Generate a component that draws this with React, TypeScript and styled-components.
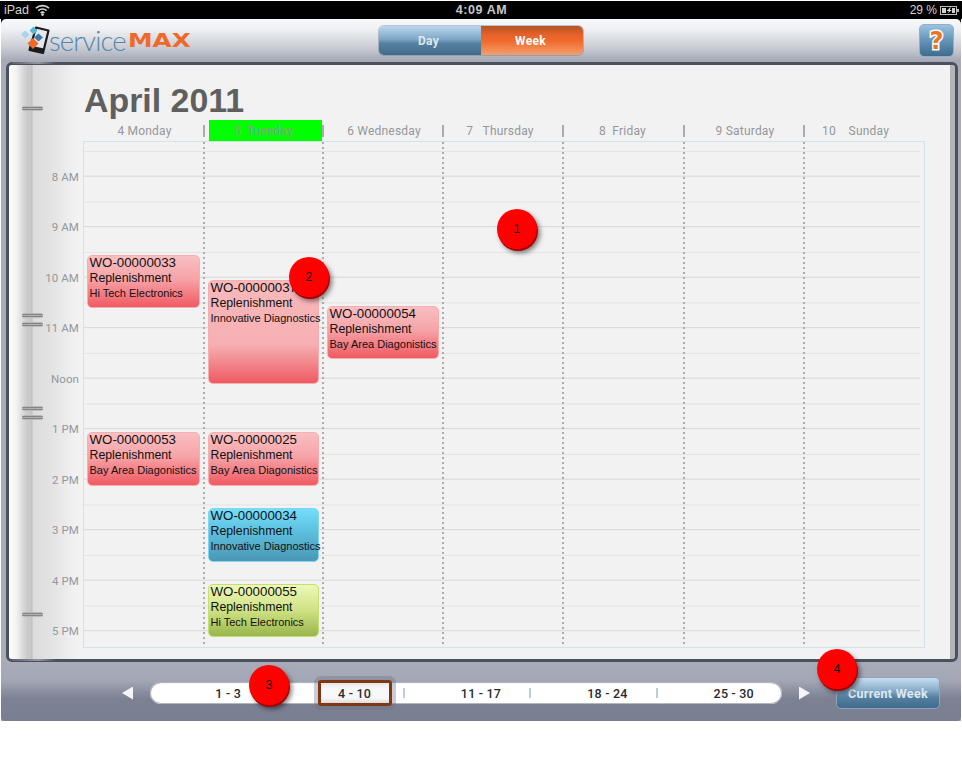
import React from 'react';
import styled, { createGlobalStyle } from 'styled-components';

const GlobalStyle = createGlobalStyle`
  html, body {
    margin: 0;
    padding: 0;
    background: #fff;
  }
  * {
    box-sizing: border-box;
  }
`;

const DIN = `Roboto, "Liberation Sans", sans-serif`;
const ARIAL = `"Liberation Sans", Arial, sans-serif`;

const Page = styled.div`
  position: relative;
  width: 962px;
  height: 770px;
  padding-top: 1px;
  background: #fff;
  overflow: hidden;
  font-family: ${ARIAL};
`;

const StatusBar = styled.div`
  height: 18px;
  display: grid;
  grid-template-columns: 1fr auto 1fr;
  align-items: center;
  padding: 0 3px 0 4px;
  background: #000;
  color: #d4d4d4;
  font-size: 12.5px;
`;

const StatusLeft = styled.div`
  display: flex;
  align-items: center;
  gap: 6px;
`;

const StatusClock = styled.div`
  font-weight: 700;
  font-size: 12.5px;
  letter-spacing: 0.6px;
  color: #c8c8c8;
`;

const StatusRight = styled.div`
  display: flex;
  align-items: center;
  justify-content: flex-end;
  gap: 3px;
  font-size: 12px;
`;

const Shell = styled.div`
  width: 960px;
  height: 702px;
  margin-left: 1px;
  background: #000;
`;

const Header = styled.header`
  height: 43px;
  display: grid;
  grid-template-columns: 1fr auto 1fr;
  align-items: center;
  padding: 0 7px;
  border-radius: 5px 5px 0 0;
  background: linear-gradient(#f7f8fa 0%, #eff0f3 25%, #c6c9d1 70%, #a2a6b3 100%);
`;

const Logo = styled.div`
  display: flex;
  align-items: center;
  margin-left: 12px;
`;

const LogoService = styled.span`
  margin-left: -1px;
  font-family: Lato, ${ARIAL};
  font-weight: 300;
  font-size: 27.5px;
  line-height: 30px;
  letter-spacing: -0.85px;
  color: #5486aa;
`;

const LogoMax = styled.span`
  display: inline-block;
  margin-left: 2px;
  font-family: "DejaVu Sans", sans-serif;
  font-weight: 700;
  font-size: 19px;
  line-height: 19px;
  color: #ef6a2a;
  transform: scaleX(1.3);
  transform-origin: left center;
`;

const Segments = styled.div`
  display: flex;
  width: 204px;
  height: 29px;
  border-radius: 5px;
  overflow: hidden;
  box-shadow: 0 0 0 1px rgba(90, 110, 140, 0.35);
`;

const Segment = styled.div<{ $active?: boolean }>`
  flex: 1;
  display: flex;
  align-items: center;
  justify-content: center;
  padding-right: 3px;
  font-family: ${DIN};
  font-weight: 700;
  font-size: 12px;
  letter-spacing: 0.3px;
  color: ${(p) => (p.$active ? '#fff' : '#dfe8f0')};
  background: ${(p) =>
    p.$active
      ? 'linear-gradient(#b55426 0%, #e5622a 30%, #f0692a 50%, #f2a06e 100%)'
      : 'linear-gradient(#bcd6ec 0%, #7fa7c8 45%, #56819f 60%, #3f6a8c 100%)'};
`;

const HelpButton = styled.div`
  justify-self: end;
  width: 35px;
  height: 33px;
  display: flex;
  align-items: center;
  justify-content: center;
  border-radius: 5px;
  border: 1px solid #8fb0c8;
  background: linear-gradient(#9cc3df 0%, #6d9cc0 40%, #3e6b8e 100%);
  font-family: "DejaVu Sans", sans-serif;
  font-weight: 700;
  font-size: 24px;
  color: #f0731f;
  -webkit-text-stroke: 3px #fff;
  paint-order: stroke fill;
`;

const ShellBody = styled.div`
  background: #a8acb9;
`;

const Notebook = styled.section`
  position: relative;
  width: 952px;
  height: 600px;
  margin-left: 5px;
  border: 3px solid #4c515f;
  border-radius: 6px;
  &::before,
  &::after {
    content: '';
    position: absolute;
    left: 3px;
    width: 44px;
    height: 2px;
    background: linear-gradient(to right, rgba(255, 255, 255, 0.1), rgba(255, 255, 255, 0.4) 60%, rgba(255, 255, 255, 0));
  }
  &::before {
    top: -3px;
  }
  &::after {
    bottom: -2px;
  }
`;

const Paper = styled.div`
  position: relative;
  height: 100%;
  padding-top: 16px;
  border-right: 5px solid #b4b5b8;
  border-radius: 3px;
  background:
    linear-gradient(to right,
      #fcfcfc 0,
      #f4f4f4 7px,
      #dddddd 13px,
      #c8c8c8 19px,
      #cbcbcb 22px,
      #b9b9b9 23px,
      #dcdcdc 24px,
      #e2e2e2 40px,
      #f2f2f2 68px);
`;

const Ring = styled.div<{ $y: number }>`
  position: absolute;
  left: 13px;
  top: ${(p) => p.$y - 65}px;
  width: 21px;
  height: 5px;
  border-radius: 3px;
  background: linear-gradient(
    #b8b8b8 0 1px,
    #858585 1px 2px,
    #b0b0b0 2px 3px,
    #858585 3px 4px,
    #bcbcbc 4px
  );
`;

const Title = styled.h1`
  margin: 0 0 1px 75px;
  font-family: ${ARIAL};
  font-weight: 700;
  font-size: 33.9px;
  line-height: 38px;
  color: #5f5f5f;
`;

const COLUMNS = '121px 119px 120px 120px 121px 120px 1fr';

const DayHeader = styled.div`
  display: grid;
  grid-template-columns: ${COLUMNS};
  width: 842px;
  height: 21px;
  margin-left: 75px;
`;

const DayLabel = styled.div<{ $today?: boolean; $nudge: number }>`
  position: relative;
  display: flex;
  align-items: center;
  justify-content: center;
  padding-right: ${(p) => p.$nudge}px;
  white-space: pre;
  font-family: ${DIN};
  font-size: 12px;
  letter-spacing: 0.2px;
  color: #94979c;
  background: ${(p) => (p.$today ? '#00ff00' : 'transparent')};
  margin-left: ${(p) => (p.$today ? '4px' : '0')};
  margin-right: ${(p) => (p.$today ? '2px' : '0')};
  &:not(:last-child)::after {
    content: '';
    position: absolute;
    right: ${(p) => (p.$today ? '-2px' : '0')};
    top: 5px;
    width: 2px;
    height: 12px;
    background: #a9abaf;
  }
`;

const Body = styled.div`
  display: flex;
`;

const Gutter = styled.div`
  width: 74px;
  padding-top: 10.5px;
`;

const HourLabel = styled.div`
  height: 50.5px;
  display: flex;
  align-items: center;
  justify-content: flex-end;
  padding-right: 4px;
  font-family: ${DIN};
  font-size: 11.5px;
  letter-spacing: 0.1px;
  color: #94979c;
`;

const Grid = styled.div`
  display: grid;
  grid-template-columns: ${COLUMNS};
  width: 842px;
  height: 507px;
  border: 1px solid #cfe5e9;
  background-color: #f2f2f2;
  background-image: linear-gradient(
    to bottom,
    transparent 9px,
    #e4e4e4 9px,
    #e4e4e4 10px,
    transparent 10px,
    transparent 34px,
    #d6d6d6 34px,
    #d6d6d6 35px,
    transparent 35px
  );
  background-size: 836px 50.5px;
  background-repeat: repeat-y;
`;

const DayColumn = styled.div`
  position: relative;
  &:not(:last-child) {
    background: linear-gradient(#adadad 2px, transparent 2px) right top / 2px 5px repeat-y;
  }
`;

const EVENT_TONES = {
  red: {
    border: '#f6aeb1',
    fill: 'linear-gradient(#f9bfc1 0%, #f6a4a8 45%, #f15a62 100%)',
  },
  tall: {
    border: '#f6aeb1',
    fill: 'linear-gradient(#f8b8ba 0%, #f6b0b3 62%, #ee5a62 100%)',
  },
  blue: {
    border: '#7fd6ee',
    fill: 'linear-gradient(#72defc 0%, #5bbbd9 50%, #4a97b6 100%)',
  },
  green: {
    border: '#c6de70',
    fill: 'linear-gradient(#eef8b8 0%, #cfe184 50%, #9ab64c 100%)',
  },
};

type Tone = keyof typeof EVENT_TONES;

const EventCard = styled.div<{ $tone: Tone; $top: number; $height: number }>`
  position: absolute;
  left: 2.5px;
  right: 5px;
  top: ${(p) => p.$top - 142}px;
  height: ${(p) => p.$height}px;
  padding-left: 2px;
  border: 1px solid ${(p) => EVENT_TONES[p.$tone].border};
  border-radius: 5px;
  background: ${(p) => EVENT_TONES[p.$tone].fill};
  color: #111;
  white-space: nowrap;
  font-family: ${ARIAL};
`;

const EventCode = styled.div`
  font-size: 13.3px;
  line-height: 14px;
  margin-bottom: 1px;
`;

const EventType = styled.div`
  font-size: 12.3px;
  line-height: 15px;
`;

const EventClient = styled.div`
  font-size: 11px;
  line-height: 14px;
`;

const Footer = styled.footer`
  height: 59px;
  display: flex;
  align-items: center;
  padding: 3px 0 0 121px;
  border-radius: 0 0 4px 4px;
  background: linear-gradient(#a8acb9 0%, #a4a8b6 30%, #7c8194 62%, #7a7e91 100%);
`;

const Arrow = styled.div<{ $right?: boolean }>`
  width: 11px;
  height: 13px;
  background: #f4f5f7;
  clip-path: ${(p) =>
    p.$right ? 'polygon(0 0, 100% 50%, 0 100%)' : 'polygon(100% 0, 0 50%, 100% 100%)'};
`;

const WeekPill = styled.div`
  display: flex;
  width: 632px;
  height: 22px;
  margin: 0 17px;
  border-radius: 11px;
  background: #fff;
  box-shadow: inset 0 0 0 1px #b4b6bd, inset 0 2px 1px -1px #8f8f8f;
`;

const WeekCell = styled.div`
  position: relative;
  flex: 0 0 126.4px;
  display: flex;
  align-items: center;
  justify-content: center;
  padding-left: 30px;
  font-family: ${DIN};
  font-weight: 500;
  font-size: 12.5px;
  letter-spacing: 0.2px;
  color: #2b2b2b;
  &:not(:first-child)::before {
    content: '';
    position: absolute;
    left: 0;
    top: 6px;
    width: 2px;
    height: 10px;
    background: #b9cde0;
  }
`;

const SelectedWeek = styled.div`
  flex: none;
  width: 74px;
  height: 26px;
  display: flex;
  align-items: center;
  justify-content: center;
  z-index: 1;
  border: 3px solid #7f3716;
  border-radius: 3px;
  background: linear-gradient(#e4e4e4, #f8f8f8 25%, #f8f8f8 75%, #dcdcdc);
  box-shadow: 0 0 0 4px rgba(105, 110, 130, 0.35);
`;

const CurrentWeek = styled.div`
  width: 104px;
  height: 32px;
  margin-left: 26px;
  display: flex;
  align-items: center;
  justify-content: center;
  border-radius: 5px;
  border: 1px solid #8ba4bc;
  background: linear-gradient(#c9def0 0%, #88adcb 40%, #55809f 65%, #3f6a8c 100%);
  font-family: ${DIN};
  font-weight: 700;
  font-size: 12.5px;
  letter-spacing: 0.3px;
  color: #dde8f1;
`;

const Badge = styled.div<{ $x: number; $y: number }>`
  position: absolute;
  left: ${(p) => p.$x - 20}px;
  top: ${(p) => p.$y - 20}px;
  width: 40px;
  height: 40px;
  display: flex;
  align-items: center;
  justify-content: center;
  border-radius: 50%;
  background: #ff0000;
  box-shadow: 1px 2px 0 #a80000, 3px 4px 5px rgba(0, 0, 0, 0.5);
  font-family: ${ARIAL};
  font-size: 12.5px;
  color: #111;
`;

const WifiIcon = () => (
  <svg width="15" height="12" viewBox="0 0 15 12" fill="none" stroke="#d4d4d4" strokeWidth="1.6">
    <path d="M1 4.2 C4.6 0.8 10.4 0.8 14 4.2" />
    <path d="M3.3 6.6 C5.6 4.5 9.4 4.5 11.7 6.6" />
    <path d="M5.6 9 C6.7 8 8.3 8 9.4 9" />
    <circle cx="7.5" cy="10.6" r="0.6" fill="#d4d4d4" />
  </svg>
);

const BatteryIcon = () => (
  <svg width="19" height="9" viewBox="0 0 19 9">
    <rect x="0.5" y="0.5" width="16" height="8" fill="none" stroke="#bdbdbd" />
    <rect x="2" y="2" width="4" height="5" fill="#d0d0d0" />
    <path d="M10 1.5 L6.5 5 H9 L7.5 7.5 L12 4 H9.5 L11 1.5 Z" fill="#e4e4e4" />
    <rect x="12" y="2" width="3" height="5" fill="#d0d0d0" />
    <rect x="17" y="3" width="2" height="3" fill="#bdbdbd" />
  </svg>
);

const LogoMark = () => (
  <svg width="30" height="29" viewBox="0 0 30 29">
    <path d="M16 1.5 L28.5 4.5 L23 27 L9.5 24 Z" fill="#e4e7ec" stroke="#1c1c1c" strokeWidth="2.2" strokeLinejoin="round" />
    <path d="M9 24 L23 27 L24 22.5 L10 19.5 Z" fill="#1c1c1c" />
    <path d="M1 8.5 L5 4.5 L9.5 8.5 L5 12.5 Z" fill="#a9d5ea" />
    <path d="M9.5 4.5 L13.5 0.5 L17.5 4.5 L13.5 8.5 Z" fill="#5cb8d6" />
    <path d="M14 11.5 L18.5 7.5 L23 11.5 L18.5 15.5 Z" fill="#3f7aa6" />
    <path d="M7.5 17.5 L13 12 L18.5 17.5 L13 23 Z" fill="#ef6a2a" />
  </svg>
);

const DAYS = [
  { label: '4 Monday', nudge: 0 },
  { label: '5  Tuesday', nudge: 4 },
  { label: '6 Wednesday', nudge: 0 },
  { label: '7   Thursday', nudge: 8 },
  { label: '8  Friday', nudge: 4 },
  { label: '9 Saturday', nudge: 0 },
  { label: '10    Sunday', nudge: 20 },
];

const HOURS = ['8 AM', '9 AM', '10 AM', '11 AM', 'Noon', '1 PM', '2 PM', '3 PM', '4 PM', '5 PM'];

const RINGS = [106, 313, 322, 406, 415, 612];

interface CalEvent {
  code: string;
  client: string;
  tone: Tone;
  top: number;
  height: number;
}

const EVENTS: CalEvent[][] = [
  [
    { code: 'WO-00000033', client: 'Hi Tech Electronics', tone: 'red', top: 255, height: 53 },
    { code: 'WO-00000053', client: 'Bay Area Diagonistics', tone: 'red', top: 432, height: 54 },
  ],
  [
    { code: 'WO-00000037', client: 'Innovative Diagnostics', tone: 'tall', top: 280, height: 104 },
    { code: 'WO-00000025', client: 'Bay Area Diagonistics', tone: 'red', top: 432, height: 54 },
    { code: 'WO-00000034', client: 'Innovative Diagnostics', tone: 'blue', top: 508, height: 54 },
    { code: 'WO-00000055', client: 'Hi Tech Electronics', tone: 'green', top: 584, height: 53 },
  ],
  [{ code: 'WO-00000054', client: 'Bay Area Diagonistics', tone: 'red', top: 306, height: 53 }],
  [],
  [],
  [],
  [],
];

const WEEKS = ['1 - 3', '4 - 10', '11 - 17', '18 - 24', '25 - 30'];

const BADGES = [
  { label: '1', x: 517, y: 229 },
  { label: '2', x: 309, y: 277 },
  { label: '3', x: 269, y: 685 },
  { label: '4', x: 837, y: 669 },
];

export default function App() {
  return (
    <Page>
      <GlobalStyle />
      <StatusBar>
        <StatusLeft>
          iPad
          <WifiIcon />
        </StatusLeft>
        <StatusClock>4:09 AM</StatusClock>
        <StatusRight>
          29 %
          <BatteryIcon />
        </StatusRight>
      </StatusBar>

      <Shell>
        <Header>
          <Logo>
            <LogoMark />
            <LogoService>service</LogoService>
            <LogoMax>MAX</LogoMax>
          </Logo>
          <Segments>
            <Segment>Day</Segment>
            <Segment $active>Week</Segment>
          </Segments>
          <HelpButton>?</HelpButton>
        </Header>

        <ShellBody>
          <Notebook>
            <Paper>
              {RINGS.map((y) => (
                <Ring key={y} $y={y} />
              ))}
              <Title>April 2011</Title>
              <DayHeader>
                {DAYS.map((day, i) => (
                  <DayLabel key={day.label} $today={i === 1} $nudge={day.nudge}>
                    {day.label}
                  </DayLabel>
                ))}
              </DayHeader>
              <Body>
                <Gutter>
                  {HOURS.map((hour) => (
                    <HourLabel key={hour}>{hour}</HourLabel>
                  ))}
                </Gutter>
                <Grid>
                  {EVENTS.map((events, i) => (
                    <DayColumn key={i}>
                      {events.map((ev) => (
                        <EventCard key={ev.code} $tone={ev.tone} $top={ev.top} $height={ev.height}>
                          <EventCode>{ev.code}</EventCode>
                          <EventType>Replenishment</EventType>
                          <EventClient>{ev.client}</EventClient>
                        </EventCard>
                      ))}
                    </DayColumn>
                  ))}
                </Grid>
              </Body>
            </Paper>
          </Notebook>

          <Footer>
            <Arrow />
            <WeekPill>
              {WEEKS.map((week, i) => (
                <WeekCell key={week}>
                  {i === 1 ? <SelectedWeek>{week}</SelectedWeek> : week}
                </WeekCell>
              ))}
            </WeekPill>
            <Arrow $right />
            <CurrentWeek>Current Week</CurrentWeek>
          </Footer>
        </ShellBody>
      </Shell>

      {BADGES.map((b) => (
        <Badge key={b.label} $x={b.x} $y={b.y}>
          {b.label}
        </Badge>
      ))}
    </Page>
  );
}
